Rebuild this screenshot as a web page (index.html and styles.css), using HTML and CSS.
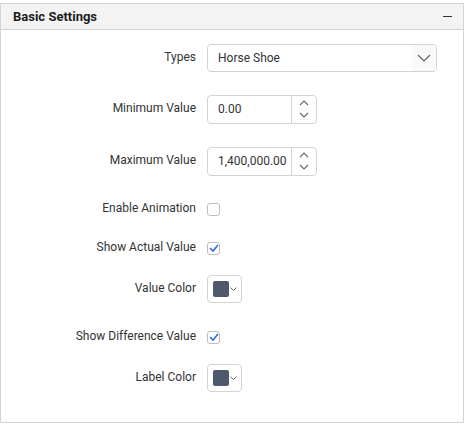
FILE: index.html
```html
<!DOCTYPE html>
<html>
<head>
<meta charset="utf-8">
<link rel="stylesheet" href="styles.css">
</head>
<body>
<div class="panel">
  <div class="header">
    <span class="title">Basic Settings</span>
    <span class="collapse"></span>
  </div>
  <div class="body">
    <div class="row r1">
      <div class="label">Types</div>
      <div class="dropdown">
        <span class="dd-text">Horse Shoe</span>
        <span class="dd-icon"><svg width="14" height="8" viewBox="0 0 14 8"><path d="M1 1 L7 7 L13 1" fill="none" stroke="#666" stroke-width="1.2"/></svg></span>
      </div>
    </div>
    <div class="row r2">
      <div class="label">Minimum Value</div>
      <div class="numeric">
        <span class="num-text">0.00</span>
        <span class="spin">
          <svg width="10" height="6" viewBox="0 0 10 6"><path d="M1 5 L5 1 L9 5" fill="none" stroke="#666" stroke-width="1.1"/></svg>
          <svg width="10" height="6" viewBox="0 0 10 6"><path d="M1 1 L5 5 L9 1" fill="none" stroke="#666" stroke-width="1.1"/></svg>
        </span>
      </div>
    </div>
    <div class="row r3">
      <div class="label">Maximum Value</div>
      <div class="numeric">
        <span class="num-text">1,400,000.00</span>
        <span class="spin">
          <svg width="10" height="6" viewBox="0 0 10 6"><path d="M1 5 L5 1 L9 5" fill="none" stroke="#666" stroke-width="1.1"/></svg>
          <svg width="10" height="6" viewBox="0 0 10 6"><path d="M1 1 L5 5 L9 1" fill="none" stroke="#666" stroke-width="1.1"/></svg>
        </span>
      </div>
    </div>
    <div class="row r4">
      <div class="label">Enable Animation</div>
      <span class="check"></span>
    </div>
    <div class="row r5">
      <div class="label">Show Actual Value</div>
      <span class="check"><svg width="10" height="8" viewBox="0 0 10 8"><path d="M1 4 L4 7 L9 1" fill="none" stroke="#2d68e8" stroke-width="1.6"/></svg></span>
    </div>
    <div class="row r6">
      <div class="label">Value Color</div>
      <div class="picker"><span class="swatch"></span><svg width="7" height="4" viewBox="0 0 7 4"><path d="M0.5 0.5 L3.5 3.5 L6.5 0.5" fill="none" stroke="#555" stroke-width="0.9"/></svg></div>
    </div>
    <div class="row r7">
      <div class="label">Show Difference Value</div>
      <span class="check"><svg width="10" height="8" viewBox="0 0 10 8"><path d="M1 4 L4 7 L9 1" fill="none" stroke="#2d68e8" stroke-width="1.6"/></svg></span>
    </div>
    <div class="row r8">
      <div class="label">Label Color</div>
      <div class="picker"><span class="swatch"></span><svg width="7" height="4" viewBox="0 0 7 4"><path d="M0.5 0.5 L3.5 3.5 L6.5 0.5" fill="none" stroke="#555" stroke-width="0.9"/></svg></div>
    </div>
  </div>
</div>
</body>
</html>
```
FILE: styles.css
```css
html, body {
  margin: 0;
  padding: 0;
  background: #fff;
}
body {
  padding-top: 3px;
  font-family: Roboto, "Liberation Sans", sans-serif;
  color: #333;
  font-size: 12px;
}
.panel {
  width: 462px;
  height: 418px;
  border: 1px solid #d4d4d4;
  box-sizing: content-box;
}
.header {
  height: 25px;
  background: #f3f3f3;
  border-bottom: 1px solid #d4d4d4;
  display: flex;
  align-items: center;
  justify-content: space-between;
  padding: 0 11px 0 12px;
}
.title {
  font-weight: bold;
  font-size: 13px;
  color: #1c1c1c;
}
.collapse {
  width: 9px;
  height: 1.5px;
  background: #333;
}
.body {
  display: flex;
  flex-direction: column;
}
.row {
  display: flex;
  align-items: center;
  height: 28px;
}
.r1 { margin-top: 14px; }
.r2 { margin-top: 23px; }
.r3 { margin-top: 24px; }
.r4 { margin-top: 20px; }
.r5 { margin-top: 11px; }
.r6 { margin-top: 13px; }
.r7 { margin-top: 20px; }
.r8 { margin-top: 13px; }
.label {
  width: 206px;
  text-align: right;
  padding-right: 11px;
  box-sizing: border-box;
  margin-top: -3px;
  color: #333;
}
.dropdown {
  width: 230px;
  height: 28px;
  box-sizing: border-box;
  border: 1px solid #d3d3d3;
  border-radius: 4px;
  display: flex;
  align-items: center;
  justify-content: space-between;
  padding-left: 10px;
}
.dd-text { color: #333; }
.dd-icon {
  width: 24px;
  height: 26px;
  display: flex;
  align-items: center;
  justify-content: center;
  background: #fafafa;
  border-radius: 0 4px 4px 0;
}
.numeric {
  width: 110px;
  height: 29px;
  box-sizing: border-box;
  border: 1px solid #d3d3d3;
  border-radius: 4px;
  display: flex;
  align-items: center;
  justify-content: space-between;
}
.num-text {
  padding-left: 10px;
}
.spin {
  width: 24px;
  height: 27px;
  border-left: 1px solid #d3d3d3;
  display: flex;
  flex-direction: column;
  align-items: center;
  justify-content: center;
  gap: 6px;
}
.spin svg { display: block; }
.check {
  width: 13px;
  height: 13px;
  box-sizing: border-box;
  border: 1px solid #bdbdbd;
  border-radius: 3px;
  display: flex;
  align-items: center;
  justify-content: center;
  background: #fff;
}
.picker {
  width: 35px;
  height: 28px;
  box-sizing: border-box;
  border: 1px solid #d3d3d3;
  border-radius: 4px;
  display: flex;
  align-items: center;
  padding-left: 5px;
  gap: 1px;
}
.swatch {
  width: 16px;
  height: 16px;
  background: #4e596b;
  border-radius: 2px;
}
.picker svg { display: block; }
```
